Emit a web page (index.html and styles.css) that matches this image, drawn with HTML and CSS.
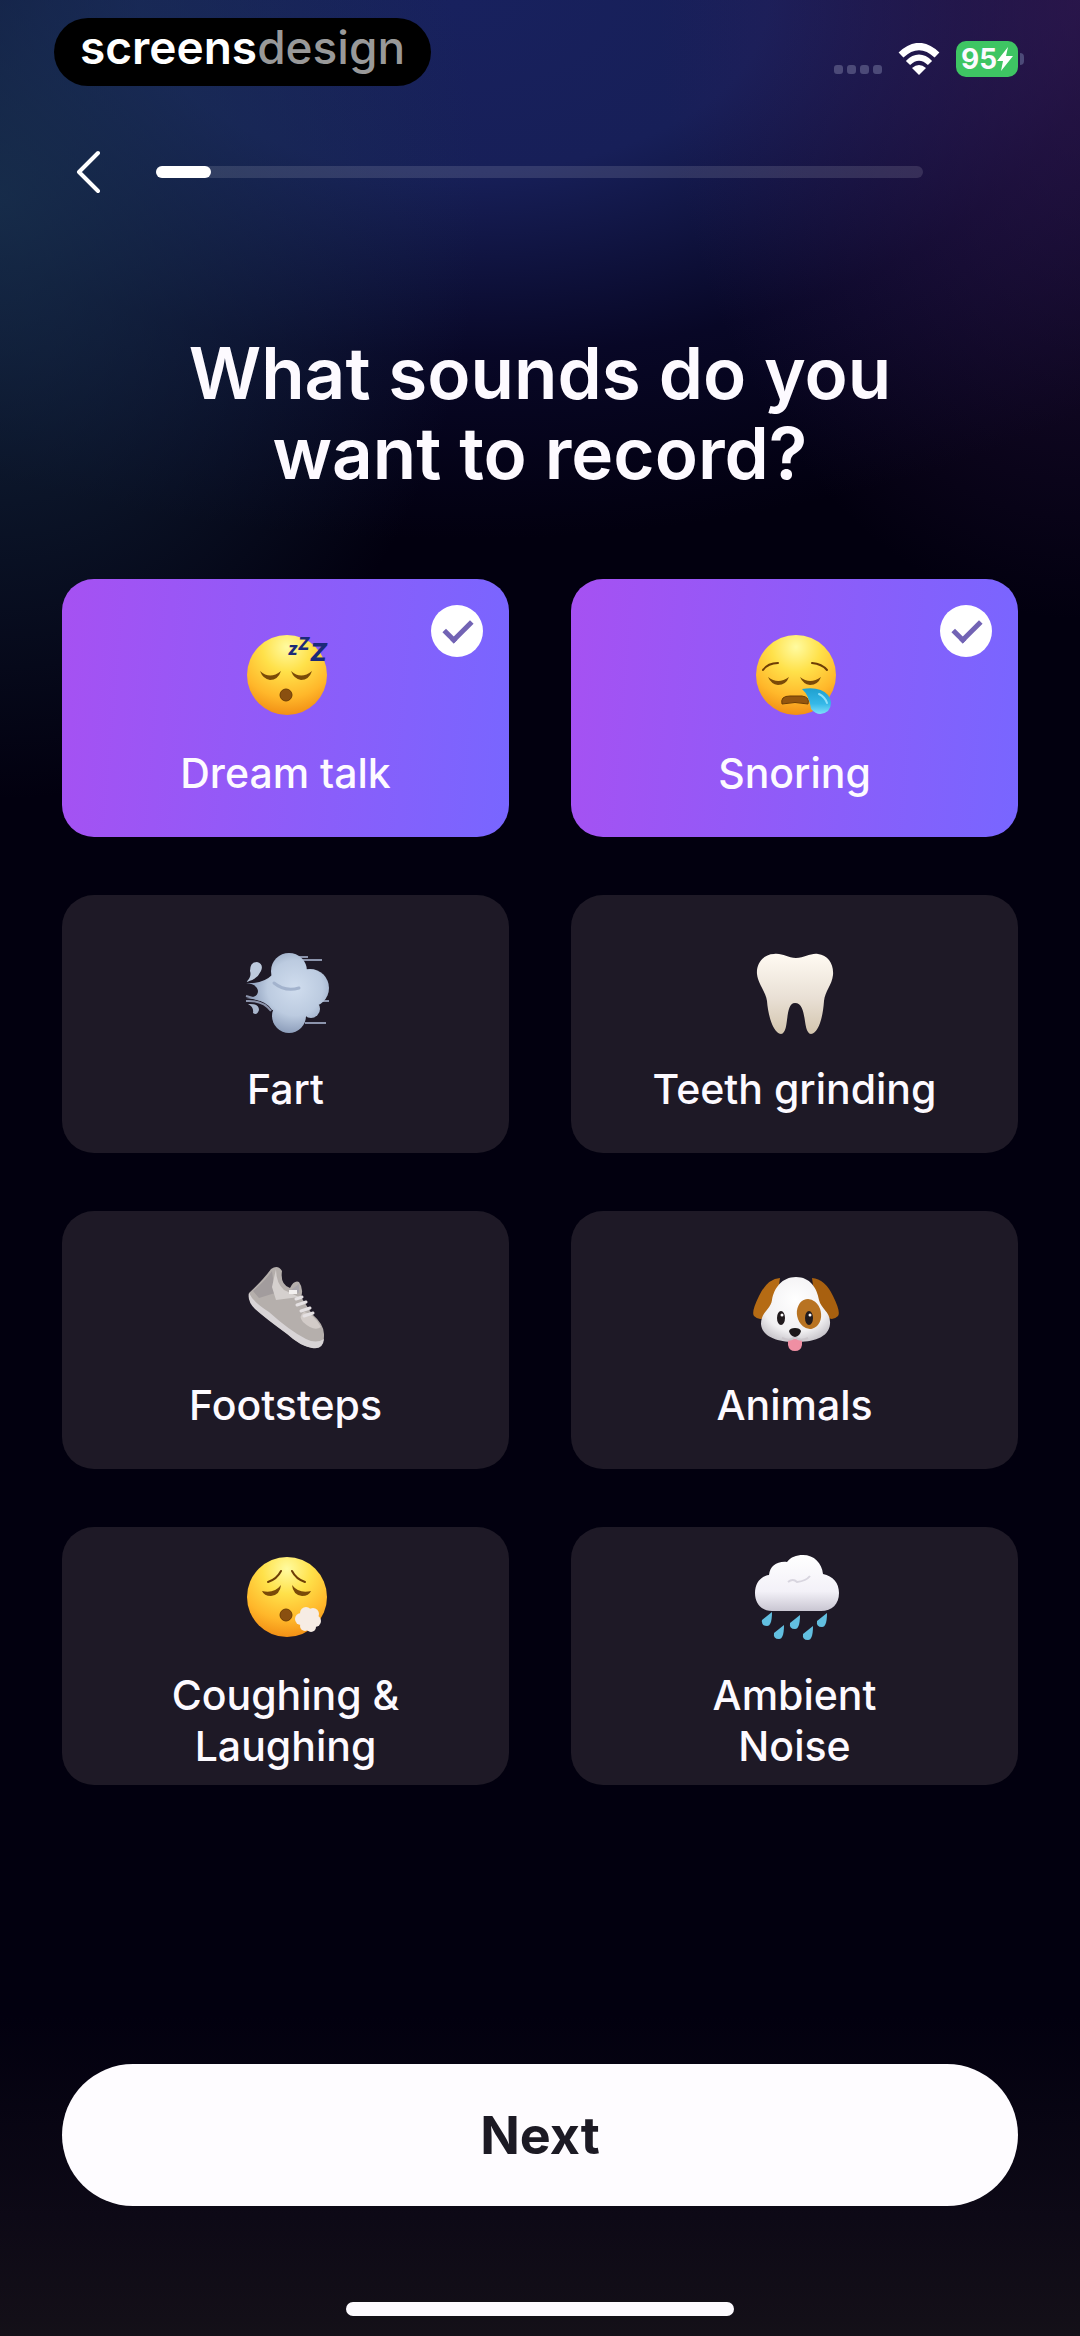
FILE: index.html
```html
<!DOCTYPE html>
<html lang="en">
<head>
  <meta charset="UTF-8">
  <meta name="viewport" content="width=device-width, initial-scale=1">
  <title>What sounds do you want to record?</title>
  <link rel="stylesheet" href="styles.css">
</head>
<body>

  <div class="statusbar">
    <div class="brand">screens<span>design</span></div>
    <div class="status-icons">
      <div class="dots"><i></i><i></i><i></i><i></i></div>
      <svg class="wifi" viewBox="0 0 42 32" aria-hidden="true">
        <path d="M3 12Q21 -5 39 12" fill="none" stroke="#fff" stroke-width="7"/>
        <path d="M10 20Q21 9 32 20" fill="none" stroke="#fff" stroke-width="6"/>
        <path d="M14 25Q21 19 28 25L21 32Z" fill="#fff"/>
      </svg>
      <div class="battery">
        <span>95</span>
        <svg viewBox="0 0 16 24" aria-hidden="true"><path d="M11 0L0 14H6L4 24L16 9H9Z" fill="#fff"/></svg>
      </div>
    </div>
  </div>

  <header class="topnav">
    <button class="back" type="button" aria-label="Back">
      <svg viewBox="0 0 26 44" aria-hidden="true"><path d="M24 3L5 22L24 41" fill="none" stroke="#fff" stroke-width="4" stroke-linecap="round" stroke-linejoin="round"/></svg>
    </button>
    <progress class="progress" value="7" max="97" aria-label="Progress"></progress>
  </header>

  <form class="content">
    <h1>What sounds do you<br>want to record?</h1>

    <div class="cards">
      <label class="card">
        <input type="checkbox" name="sound" checked>
        <svg class="emoji" viewBox="0 0 90 90" aria-hidden="true">
          <defs>
            <radialGradient id="face" cx="50%" cy="15%" r="88%">
              <stop offset="0" stop-color="#fffba0"/>
              <stop offset=".35" stop-color="#ffe14a"/>
              <stop offset=".72" stop-color="#ffb72a"/>
              <stop offset="1" stop-color="#f08a12"/>
            </radialGradient>
          </defs>
          <circle cx="46" cy="45" r="40" fill="url(#face)"/>
          <g fill="#7a4a08">
            <path d="M19 41Q29 50 40 41Q37 50 29 50Q22 49 19 41Z"/>
            <path d="M50 41Q60 50 71 41Q68 50 60 50Q53 49 50 41Z"/>
          </g>
          <circle cx="45" cy="65" r="6" fill="#8a5010" stroke="#6d3d05"/>
          <g class="zzz">
            <text x="47" y="25" font-size="17">z</text>
            <text x="57" y="20" font-size="17">Z</text>
            <text x="69" y="31" font-size="25">Z</text>
          </g>
        </svg>
        <span class="label">Dream talk</span>
      </label>

      <label class="card">
        <input type="checkbox" name="sound" checked>
        <svg class="emoji" viewBox="0 0 90 90" aria-hidden="true">
          <defs>
            <linearGradient id="drop" x1="0" y1="0" x2="0" y2="1">
              <stop offset="0" stop-color="#1fa0cf"/>
              <stop offset=".6" stop-color="#35b8e8"/>
              <stop offset="1" stop-color="#7fe0fb"/>
            </linearGradient>
          </defs>
          <circle cx="46" cy="45" r="40" fill="url(#face)"/>
          <g fill="none" stroke="#6d3d05" stroke-width="2" stroke-linecap="round">
            <path d="M13 40Q18 33 28 33"/>
            <path d="M62 33Q72 34 77 40"/>
          </g>
          <g fill="#7a4a08">
            <path d="M18 47Q28 55 39 47Q36 55 28 55Q21 54 18 47Z"/>
            <path d="M50 47Q60 55 71 47Q68 55 60 55Q53 54 50 47Z"/>
          </g>
          <path d="M32 74Q30 66 40 66H52Q60 67 58 74Q45 71 32 74Z" fill="#94560f" stroke="#6d3d05"/>
          <path d="M52 59Q70 56 78 65Q84 73 78 81Q69 88 61 79Q59 65 52 59Z" fill="url(#drop)"/>
          <path d="M69 64Q75 67 77 73" fill="none" stroke="#8fe0f8" stroke-width="2" stroke-linecap="round"/>
        </svg>
        <span class="label">Snoring</span>
      </label>

      <label class="card">
        <input type="checkbox" name="sound">
        <svg class="emoji" viewBox="0 0 90 90" aria-hidden="true">
          <defs>
            <radialGradient id="puff" gradientUnits="userSpaceOnUse" cx="54" cy="42" r="46">
              <stop offset="0" stop-color="#d0ddee"/>
              <stop offset=".6" stop-color="#bccbe0"/>
              <stop offset="1" stop-color="#8c9dba"/>
            </radialGradient>
          </defs>
          <g fill="none" stroke="#8c94ac" stroke-width="2">
            <path d="M58 11H67M60 14H81M64 77H85M80 55H88"/>
            <path d="M5 55Q22 54 30 65M5 50Q12 52 24 55"/>
          </g>
          <g fill="url(#puff)">
            <path d="M5 37Q22 38 31 29L60 30V62L31 64Q26 54 5 52Q17 52 17 45Q16 38 5 37Z"/>
            <circle cx="70" cy="63" r="9"/>
            <circle cx="48" cy="70" r="17"/>
            <circle cx="69" cy="42" r="19"/>
            <circle cx="48" cy="25" r="18"/>
            <circle cx="54" cy="48" r="20"/>
          </g>
          <path d="M33 37Q44 46 58 42" fill="none" stroke="#a3b3cd" stroke-width="3" stroke-linecap="round"/>
          <path d="M5 36Q11 31 9 25Q9 16 16 16Q23 18 20 25Q16 34 5 36Z" fill="#bdcadd"/>
          <path d="M7 58Q18 57 18 64Q16 70 12 67Q13 61 7 58Z" fill="#a9b6cc"/>
        </svg>
        <span class="label">Fart</span>
      </label>

      <label class="card">
        <input type="checkbox" name="sound">
        <svg class="emoji" viewBox="0 0 90 90" aria-hidden="true">
          <defs>
            <linearGradient id="tooth" x1="0" y1="0" x2="0" y2="1">
              <stop offset="0" stop-color="#fffaf2"/>
              <stop offset=".55" stop-color="#e9e0d5"/>
              <stop offset="1" stop-color="#d3c5ae"/>
            </linearGradient>
          </defs>
          <path d="M24 8C33 7 37 12 46 12S60 7 68 8C78 9 84 18 83 29C82 39 75 45 74 55C73 70 69 87 61 88C52 87 58 57 45 57C34 57 40 87 31 88C23 87 18 69 17 55C16 46 8 38 7 28C6 17 14 8 24 8Z" fill="url(#tooth)"/>
        </svg>
        <span class="label">Teeth grinding</span>
      </label>

      <label class="card">
        <input type="checkbox" name="sound">
        <svg class="emoji" viewBox="0 0 90 90" aria-hidden="true">
          <path d="M8 31Q23 17 30 7Q37 2 41 9Q39 23 49 26Q53 18 58 20Q63 27 60 35L71 52Q84 63 83 74Q83 85 72 86Q61 85 48 73Q26 57 15 47Q7 39 8 31Z" fill="#b5afac"/>
          <path d="M8 31Q12 40 28 50Q49 69 65 77Q75 82 83 77Q82 88 71 86Q59 84 46 72Q24 56 14 47Q6 39 8 31Z" fill="#d8d4d6"/>
          <path d="M12 29Q24 19 31 9L34 31L18 36Z" fill="#a29c9d"/>
          <path d="M35 7Q35 21 43 28L58 35L35 38L31 25Z" fill="#d5d0ce"/>
          <path d="M50 28L58 22V31Z" fill="#a9a5ab"/>
          <path d="M63 50Q72 51 80 65Q73 70 62 60Q57 54 63 50Z" fill="#d2cbc8"/>
          <path d="M55 37L61 35M56 43L65 40M60 49L69 46M63 54L72 51" stroke="#e5e1e3" stroke-width="3" stroke-linecap="round"/>
          <path d="M48 30H56" stroke="#f3f0ef" stroke-width="4"/>
        </svg>
        <span class="label">Footsteps</span>
      </label>

      <label class="card">
        <input type="checkbox" name="sound">
        <svg class="emoji" viewBox="0 0 90 90" aria-hidden="true">
          <defs>
            <radialGradient id="dog" cx="50%" cy="35%" r="70%">
              <stop offset="0" stop-color="#fff"/>
              <stop offset=".7" stop-color="#f1f0f2"/>
              <stop offset="1" stop-color="#c3c0c6"/>
            </radialGradient>
          </defs>
          <path d="M30 16Q17 17 9 34Q1 50 4 54Q10 60 17 54L28 30Z" fill="#b56b14"/>
          <path d="M62 16Q75 17 83 34Q91 50 88 54Q82 60 75 54L64 30Z" fill="#a8600f"/>
          <path d="M46 15C60 15 67 26 69 38C71 47 81 50 80 62C79 76 62 80 46 80S12 76 11 62C11 50 21 47 22 38C24 26 32 15 46 15Z" fill="url(#dog)"/>
          <ellipse cx="59" cy="52" rx="12" ry="15" fill="#b87322" transform="rotate(-12 59 52)"/>
          <ellipse cx="31" cy="56" rx="4" ry="7" fill="#201a1d"/>
          <ellipse cx="59" cy="56" rx="4" ry="7" fill="#201a1d"/>
          <circle cx="32" cy="53" r="1.5" fill="#fff"/>
          <circle cx="60" cy="53" r="1.5" fill="#fff"/>
          <path d="M38 77H52V83Q51 89 45 89T38 83Z" fill="#ef8fa3"/>
          <path d="M32 76Q40 80 45 75Q50 80 58 76" fill="none" stroke="#cbc6cb" stroke-width="2"/>
          <path d="M39 69Q40 66 45 66T51 69Q50 74 45 75Q40 74 39 69Z" fill="#1b1719"/>
        </svg>
        <span class="label">Animals</span>
      </label>

      <label class="card">
        <input type="checkbox" name="sound">
        <svg class="emoji" viewBox="0 0 90 90" aria-hidden="true">
          <circle cx="46" cy="45" r="40" fill="url(#face)"/>
          <g fill="none" stroke="#6d3d05" stroke-width="2" stroke-linecap="round">
            <path d="M27 30Q36 27 40 19"/>
            <path d="M51 19Q55 27 64 30"/>
          </g>
          <g fill="#7a4a08">
            <path d="M21 39Q33 42 40 33Q39 43 30 44Q23 44 21 39Z"/>
            <path d="M51 33Q58 42 70 39Q68 44 61 44Q52 43 51 33Z"/>
          </g>
          <circle cx="45" cy="63" r="6" fill="#8a5010" stroke="#6d3d05"/>
          <g fill="#f6ece4">
            <circle cx="67" cy="68" r="8"/>
            <circle cx="60" cy="67" r="6"/>
            <circle cx="65" cy="61" r="6"/>
            <circle cx="72" cy="62" r="6"/>
            <circle cx="74" cy="69" r="6"/>
            <circle cx="70" cy="75" r="5"/>
            <circle cx="64" cy="74" r="5"/>
          </g>
        </svg>
        <span class="label">Coughing &amp;<br>Laughing</span>
      </label>

      <label class="card">
        <input type="checkbox" name="sound">
        <svg class="emoji" viewBox="0 0 90 90" aria-hidden="true">
          <defs>
            <linearGradient id="cloud" gradientUnits="userSpaceOnUse" x1="0" y1="3" x2="0" y2="59">
              <stop offset="0" stop-color="#fff"/>
              <stop offset=".65" stop-color="#f3f1f8"/>
              <stop offset="1" stop-color="#c9c6d2"/>
            </linearGradient>
          </defs>
          <path d="M22 59C11 59 5 51 5 41C5 31 11 24 19 23C20 14 27 9 37 10C41 5 46 3 53 3C64 3 72 11 73 22C83 24 89 31 89 41C89 52 82 59 71 59Z" fill="url(#cloud)"/>
          <path d="M38 30Q43 26 47 30Q56 29 60 24" fill="none" stroke="#d8d5df" stroke-width="2"/>
          <g fill="#62bfe0">
            <path id="rain" d="M22 60L12 68Q11 74 17 74Q22 74 22 60Z"/>
            <use href="#rain" x="12" y="13"/>
            <use href="#rain" x="28" y="3"/>
            <use href="#rain" x="41" y="14"/>
            <use href="#rain" x="55" y="1"/>
          </g>
        </svg>
        <span class="label">Ambient<br>Noise</span>
      </label>
    </div>

    <button class="next" type="submit">Next</button>
  </form>

  <div class="home-indicator"></div>

</body>
</html>
```
FILE: styles.css
```css
*,
*::after {
  box-sizing: border-box;
}

body {
  margin: 0;
  min-height: 100vh;
  display: flex;
  flex-direction: column;
  font-family: Inter, "Liberation Sans", sans-serif;
  color: #fdfaff;
  background-color: #02000f;
  background-image:
    linear-gradient(to top, #141018 0, #0d0916 120px, rgba(2, 0, 15, 0) 320px),
    radial-gradient(420px 620px at 100% 0, rgba(62, 30, 96, 0.6), rgba(40, 12, 70, 0) 100%),
    radial-gradient(480px 600px at 0 200px, rgba(26, 54, 82, 0.75), rgba(10, 30, 50, 0) 100%),
    radial-gradient(980px 540px at 42% 0, #18215e 0, #171f58 32%, rgba(12, 12, 54, 0.6) 66%, rgba(2, 0, 15, 0) 100%);
  background-repeat: no-repeat;
}

.statusbar {
  display: flex;
  justify-content: space-between;
  align-items: center;
  padding: 18px 56px 0 54px;
}

.brand {
  height: 68px;
  padding: 0 26px;
  border-radius: 34px;
  background: #000;
  color: #fff;
  font-size: 46px;
  font-weight: 600;
  line-height: 58px;
}

.brand span {
  color: #999;
  font-weight: 500;
}

.status-icons {
  display: flex;
  align-items: center;
  gap: 16px;
  padding-top: 14px;
}

.dots {
  display: flex;
  gap: 4px;
  padding-top: 20px;
}

.dots i {
  width: 9px;
  height: 9px;
  border-radius: 3px;
  background: #4c4a78;
}

.wifi {
  width: 42px;
  height: 32px;
}

.battery {
  position: relative;
  display: flex;
  align-items: center;
  justify-content: center;
  width: 62px;
  height: 36px;
  margin-right: 6px;
  border-radius: 10px;
  background: #3ec563;
  font-size: 28px;
  font-weight: 700;
}

.battery svg {
  width: 16px;
  height: 24px;
}

.battery::after {
  content: "";
  position: absolute;
  right: -6px;
  width: 4px;
  height: 12px;
  border-radius: 0 4px 4px 0;
  background: #4c4a78;
}

.topnav {
  display: flex;
  align-items: center;
  gap: 44px;
  height: 60px;
  margin-top: 56px;
  padding: 0 157px 0 62px;
}

.back {
  width: 50px;
  height: 60px;
  padding: 0 12px;
  border: none;
  background: none;
  cursor: pointer;
}

.back svg {
  display: block;
  width: 26px;
  height: 44px;
}

.progress {
  flex: 1;
  height: 12px;
  appearance: none;
  border: none;
}

.progress::-webkit-progress-bar {
  border-radius: 6px;
  background: rgba(255, 255, 255, 0.12);
}

.progress::-webkit-progress-value {
  border-radius: 6px;
  background: #fff;
}

.content {
  flex: 1;
  display: flex;
  flex-direction: column;
  padding: 131px 62px 0;
}

h1 {
  margin: 0 0 86px;
  font-size: 71px;
  font-weight: 600;
  line-height: 80px;
  text-align: center;
}

.cards {
  display: grid;
  grid-template-columns: 1fr 1fr;
  gap: 58px 62px;
}

.card {
  position: relative;
  display: flex;
  flex-direction: column;
  align-items: center;
  justify-content: center;
  min-height: 258px;
  border-radius: 32px;
  background: #1e1926;
  cursor: pointer;
}

.card:has(input:checked) {
  background: linear-gradient(95deg, #a651f2, #7866ff);
}

.card input {
  position: absolute;
  top: 26px;
  right: 26px;
  width: 52px;
  height: 52px;
  margin: 0;
  appearance: none;
  border-radius: 50%;
  cursor: pointer;
}

.card input:checked {
  background: #fff;
}

.card input:checked::after {
  content: "";
  position: absolute;
  top: 15px;
  left: 13px;
  width: 28px;
  height: 16px;
  border: solid #7263b4;
  border-width: 0 0 5px 5px;
  transform: rotate(-45deg);
}

.emoji {
  width: 90px;
  height: 90px;
  margin: 12px 0 28px;
}

.zzz {
  fill: #1b2a78;
  font-weight: 800;
  font-style: italic;
}

.label {
  font-size: 41px;
  font-weight: 500;
  line-height: 51px;
  text-align: center;
}

.next {
  height: 142px;
  margin-top: auto;
  border: none;
  border-radius: 71px;
  background: #fefcff;
  color: #1c1a24;
  font-family: inherit;
  font-size: 52px;
  font-weight: 700;
  cursor: pointer;
}

.home-indicator {
  width: 36%;
  height: 14px;
  margin: 96px auto 20px;
  border-radius: 7px;
  background: #fdfaff;
}
```
